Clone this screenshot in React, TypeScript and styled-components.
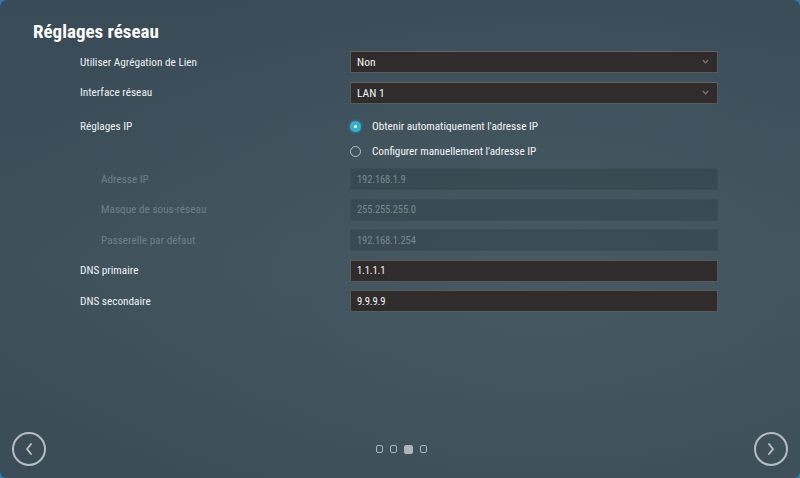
import React from "react";
import styled, { createGlobalStyle } from "styled-components";

const Global = createGlobalStyle`
  html, body { margin: 0; padding: 0; background: #2c7bb0; }
  body { width: 800px; height: 478px; overflow: hidden; }
  * { box-sizing: border-box; }
`;

const FONT = `"Roboto Condensed", "Liberation Sans", Arial, sans-serif`;

const Window = styled.div`
  width: 800px;
  height: 478px;
  border-radius: 7px;
  overflow: hidden;
  display: flex;
  flex-direction: column;
  font-family: ${FONT};
  color: #f2f4f5;
  background:
    radial-gradient(ellipse 70% 70% at 68% 58%, rgba(78, 96, 106, 0.55) 0%, rgba(78, 96, 106, 0) 100%),
    linear-gradient(180deg, #394b56 0%, #3e515b 55%, #3a4c56 100%);
`;

const Title = styled.h1`
  margin: 0;
  padding: 20px 0 0 33px;
  height: 47px;
  font-size: 19px;
  font-weight: 700;
  line-height: 24px;
  color: #ffffff;
`;

const Form = styled.div`
  display: flex;
  flex-direction: column;
  padding-left: 80px;
`;

const Row = styled.div`
  display: grid;
  grid-template-columns: 270px 368px;
  align-items: center;
  height: 30.5px;
`;

const TopRow = styled.div`
  display: grid;
  grid-template-columns: 270px 368px;
  align-items: start;
  padding-top: 6px;
`;

const Label = styled.div<{ $muted?: boolean }>`
  font-size: 11.25px;
  line-height: 25px;
  padding-left: ${(p) => (p.$muted ? "21px" : "0")};
  color: ${(p) => (p.$muted ? "#6f7f88" : "#eef1f2")};
`;

const Select = styled.div`
  position: relative;
  height: 22px;
  background: #2f2c2b;
  border: 1px solid #5b5a58;
  border-top-color: #66645f;
  display: flex;
  align-items: center;
  padding-left: 6px;
  font-size: 11.5px;
  color: #f4f4f4;
`;

const Chevron = styled.svg`
  position: absolute;
  right: 8px;
  top: 7px;
`;

const Input = styled.div<{ $disabled?: boolean }>`
  height: 22px;
  display: flex;
  align-items: center;
  padding-left: 6px;
  font-size: 10.6px;
  letter-spacing: -0.15px;
  background: ${(p) => (p.$disabled ? "rgba(40, 55, 63, 0.35)" : "#2f2c2b")};
  border: 1px solid ${(p) => (p.$disabled ? "rgba(70, 86, 95, 0.4)" : "#5b5a58")};
  color: ${(p) => (p.$disabled ? "#7a8890" : "#f4f4f4")};
`;

const RadioGroup = styled.div`
  display: flex;
  flex-direction: column;
`;

const RadioOption = styled.div`
  display: flex;
  align-items: center;
  height: 25px;
  gap: 11px;
  font-size: 11.2px;
  color: #f2f4f5;
`;

const RadioDot = styled.span<{ $checked?: boolean }>`
  width: 11px;
  height: 11px;
  border-radius: 50%;
  display: inline-flex;
  align-items: center;
  justify-content: center;
  flex-shrink: 0;
  background: ${(p) => (p.$checked ? "#2cb2cf" : "transparent")};
  border: ${(p) => (p.$checked ? "none" : "1.5px solid #b9c0c4")};
  box-shadow: ${(p) => (p.$checked ? "0 0 3px rgba(60, 200, 230, 0.6)" : "none")};
  &::after {
    content: "";
    display: ${(p) => (p.$checked ? "block" : "none")};
    width: 3px;
    height: 3px;
    border-radius: 50%;
    background: #ffffff;
  }
`;

const Spacer = styled.div`
  flex: 1;
`;

const Footer = styled.div`
  display: flex;
  align-items: center;
  justify-content: space-between;
  padding: 0 12px 12px 12px;
`;

const NavButton = styled.button`
  width: 34px;
  height: 34px;
  border-radius: 50%;
  border: 2px solid #b6bec3;
  background: transparent;
  display: flex;
  align-items: center;
  justify-content: center;
  padding: 0;
  cursor: pointer;
`;

const Dots = styled.div`
  display: flex;
  align-items: center;
  gap: 7px;
  margin-left: 2px;
`;

const Dot = styled.span<{ $active?: boolean }>`
  width: ${(p) => (p.$active ? "9px" : "7px")};
  height: ${(p) => (p.$active ? "9px" : "8px")};
  border-radius: 2px;
  border: 1.5px solid #adb5ba;
  background: ${(p) => (p.$active ? "#aeb5ba" : "transparent")};
`;

const ChevronDown = () => (
  <Chevron width="7" height="5" viewBox="0 0 7 5">
    <path d="M0.8 1 L3.5 3.8 L6.2 1" fill="none" stroke="#7c7a77" strokeWidth="1.2" />
  </Chevron>
);

const Arrow = ({ dir }: { dir: "left" | "right" }) => (
  <svg width="10" height="14" viewBox="0 0 10 14">
    <path
      d={dir === "left" ? "M7 2 L3 7 L7 12" : "M3 2 L7 7 L3 12"}
      fill="none"
      stroke="#b6bec3"
      strokeWidth="2"
      strokeLinecap="round"
      strokeLinejoin="round"
    />
  </svg>
);

export default function App() {
  return (
    <>
      <Global />
      <Window>
        <Title>Réglages réseau</Title>
        <Form>
          <Row>
            <Label>Utiliser Agrégation de Lien</Label>
            <Select>
              Non
              <ChevronDown />
            </Select>
          </Row>
          <Row>
            <Label>Interface réseau</Label>
            <Select>
              LAN 1
              <ChevronDown />
            </Select>
          </Row>
          <TopRow>
            <Label>Réglages IP</Label>
            <RadioGroup>
              <RadioOption>
                <RadioDot $checked />
                Obtenir automatiquement l'adresse IP
              </RadioOption>
              <RadioOption>
                <RadioDot />
                Configurer manuellement l'adresse IP
              </RadioOption>
            </RadioGroup>
          </TopRow>
          <Row>
            <Label $muted>Adresse IP</Label>
            <Input $disabled>192.168.1.9</Input>
          </Row>
          <Row>
            <Label $muted>Masque de sous-réseau</Label>
            <Input $disabled>255.255.255.0</Input>
          </Row>
          <Row>
            <Label $muted>Passerelle par défaut</Label>
            <Input $disabled>192.168.1.254</Input>
          </Row>
          <Row>
            <Label>DNS primaire</Label>
            <Input>1.1.1.1</Input>
          </Row>
          <Row>
            <Label>DNS secondaire</Label>
            <Input>9.9.9.9</Input>
          </Row>
        </Form>
        <Spacer />
        <Footer>
          <NavButton aria-label="Précédent">
            <Arrow dir="left" />
          </NavButton>
          <Dots>
            <Dot />
            <Dot />
            <Dot $active />
            <Dot />
          </Dots>
          <NavButton aria-label="Suivant">
            <Arrow dir="right" />
          </NavButton>
        </Footer>
      </Window>
    </>
  );
}
